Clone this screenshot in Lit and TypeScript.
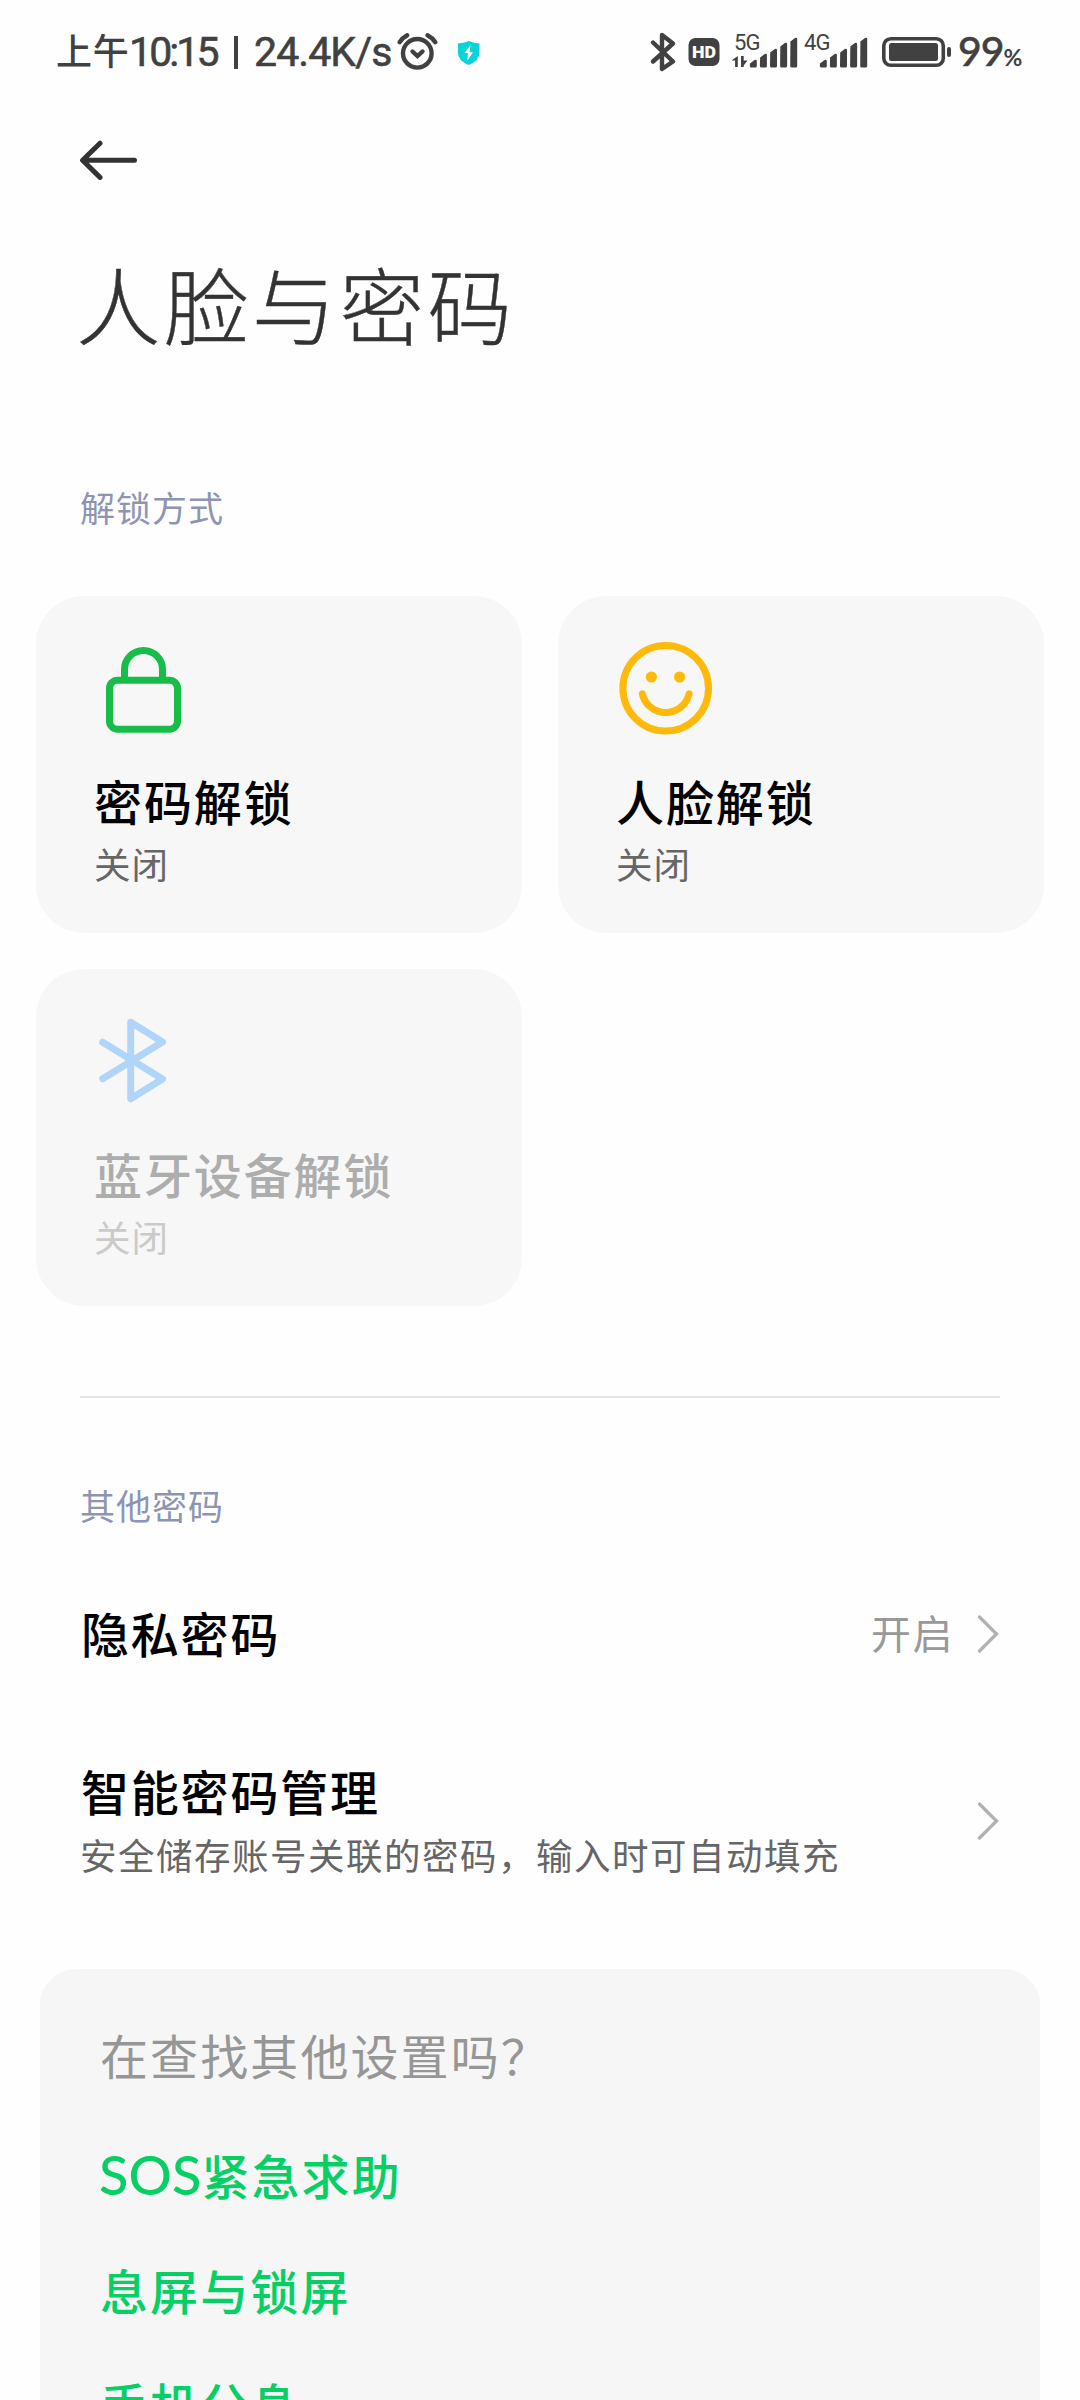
import { LitElement, html, svg, css, type TemplateResult } from "lit";
import { customElement, property } from "lit/decorators.js";

const lockIcon = svg`
  <g fill="none" stroke="#18bd49" stroke-width="7">
    <rect x="13.5" y="40.2" width="68" height="49" rx="8" />
    <path d="M28.5 40V29.5a19 19 0 0 1 38 0V40" />
  </g>`;

const faceIcon = svg`
  <g fill="none" stroke="#ffb90a" stroke-width="7" stroke-linecap="round">
    <circle cx="47.7" cy="48.3" r="42.8" />
    <path d="M24.3 53.9a24 24 0 0 0 46.8 0" />
  </g>
  <circle cx="33.4" cy="37" r="5.6" fill="#ffb90a" />
  <circle cx="61.6" cy="37" r="5.6" fill="#ffb90a" />`;

const bluetoothIcon = svg`
  <path d="M6.7 29.3 66.5 66 34.7 85.7V9.3L66.5 29 6.7 65.7" fill="none"
    stroke="#b1d5f9" stroke-width="7" stroke-linecap="round" stroke-linejoin="round" />`;

@customElement("status-bar")
class StatusBar extends LitElement {
  static styles = css`
    :host {
      display: flex;
      justify-content: space-between;
      height: 104px;
      box-sizing: border-box;
      padding: 0 53px 0 56px;
      color: #414141;
      fill: #414141;
      font-family: Roboto, "Noto Sans CJK SC", sans-serif;
    }
    svg {
      display: block;
      flex: none;
    }
    .group {
      display: flex;
      align-items: center;
      height: 104px;
    }
    .time {
      display: flex;
      align-items: center;
      width: 340px;
      font-size: 41px;
      line-height: 104px;
      font-weight: 400;
      white-space: pre;
      -webkit-text-stroke: 0.6px #414141;
    }
    .han {
      width: 73px;
      padding-top: 2px;
      font-size: 36px;
      letter-spacing: 0.8px;
      font-weight: 500;
      -webkit-text-stroke: 0;
    }
    .clock {
      width: 105px;
      letter-spacing: -2.9px;
    }
    .bar {
      width: 4px;
      height: 33px;
      margin-right: 16px;
      background: #414141;
    }
    .speed {
      letter-spacing: -0.9px;
    }
    .level {
      width: 69px;
      margin-left: -2px;
      padding-top: 3px;
      font-size: 41px;
      line-height: 104px;
      font-weight: 500;
      font-family: Lato, Roboto, sans-serif;
      letter-spacing: -1px;
      white-space: nowrap;
      -webkit-text-stroke: 0.5px #414141;
    }
    .percent {
      font-size: 23px;
      font-weight: 700;
      -webkit-text-stroke: 0;
    }
    .tag {
      font-size: 22px;
      letter-spacing: -0.8px;
    }
    .hd {
      font-size: 16.5px;
      font-weight: 900;
      fill: #fff;
    }
  `;

  private bars(x: number) {
    const tops = [60, 54, 49, 43, 38];
    return tops.map((top, i) => {
      const left = x + i * 10.1;
      return svg`<path d="M${left} ${top + 3.5}l4.6-3.6q2.2-.8 2.2 1.2V66q0 1.6-1.6 1.6h-3.8q-1.6 0-1.6-1.6z" />`;
    });
  }

  render() {
    return html`
      <div class="group">
        <div class="time">
          <span class="han">上午</span><span class="clock">10:15</span><span class="bar"></span><span class="speed">24.4K/s</span>
        </div>
        <svg width="90" height="104" viewBox="396 0 90 104">
          <g fill="none" stroke="#414141" stroke-width="4.4" stroke-linecap="round">
            <circle cx="417.3" cy="53.3" r="14.3" />
            <path d="M399.6 42.2q3-4.6 7.6-7M427.5 35.2q4.8 2.4 7.8 7M412.5 51.5l5 4.6 5-4.6" />
          </g>
          <path d="M468.7 41q5 2.4 10.8 2.6v8.8q0 8-10.8 12.6-10.8-4.6-10.8-12.6V43.6q5.8-.2 10.8-2.6z" fill="#0cd3d8" />
          <path d="M470.5 45l-6 8h3.4l-.4 7.4 5.4-8.2h-3.2z" fill="#fff" />
        </svg>
      </div>
      <div class="group">
        <svg width="312" height="104" viewBox="649 0 312 104">
          <path d="M654 42.5 674 61.5 663 69V35L674 43.5 654 61.5" fill="none" stroke="#414141"
            stroke-width="4.4" stroke-linecap="round" stroke-linejoin="round" />
          <rect x="689.5" y="38" width="31" height="28" rx="7" />
          <text class="hd" x="693" y="58" textLength="24" lengthAdjust="spacingAndGlyphs">HD</text>
          <text class="tag" x="735" y="49.5">5G</text>
          <path d="M732.5 60.5 738.8 56V67h-2.7v-6.5zM742 56h2.7v4.5h3.8l-3.8 5V67H742z" />
          ${this.bars(751)}
          <text class="tag" x="805" y="49.5">4G</text>
          ${this.bars(821)}
          <rect x="884.8" y="38.8" width="59.5" height="26.4" rx="7" fill="none" stroke="#414141" stroke-width="3.6" />
          <rect x="890" y="43" width="49" height="18" rx="2.5" />
          <rect x="948" y="47" width="4" height="10" rx="2" />
        </svg>
        <span class="level">99<span class="percent">%</span></span>
      </div>
    `;
  }
}

@customElement("unlock-card")
class UnlockCard extends LitElement {
  @property() name = "";
  @property() state = "";
  @property({ type: Boolean }) disabled = false;
  @property({ attribute: false }) icon: TemplateResult | unknown;

  static styles = css`
    :host {
      display: flex;
      flex-direction: column;
      box-sizing: border-box;
      height: 337px;
      padding: 44px 58px 0 58px;
      border-radius: 48px;
      background: #f7f7f7;
    }
    svg {
      display: block;
      margin: 0 0 28px 2px;
    }
    .name {
      font-size: 48px;
      line-height: 72px;
      letter-spacing: 1.9px;
      font-weight: 500;
      color: #000;
    }
    .state {
      font-size: 36.5px;
      line-height: 56px;
      letter-spacing: 1px;
      color: #666;
    }
    .off .name {
      color: #adadad;
    }
    .off .state {
      color: #cacaca;
    }
  `;

  render() {
    return html`
      <svg width="96" height="96" viewBox="0 0 96 96">${this.icon}</svg>
      <div class=${this.disabled ? "off" : "on"}>
        <div class="name">${this.name}</div>
        <div class="state">${this.state}</div>
      </div>
    `;
  }
}

@customElement("app-root")
class AppRoot extends LitElement {
  static styles = css`
    :host {
      display: block;
      height: 2400px;
      overflow: hidden;
      background: #fefefe;
      font-family: "Noto Sans CJK SC", sans-serif;
    }
    svg {
      display: block;
      flex: none;
    }
    .back {
      padding: 36px 0 0 78px;
      height: 40px;
    }
    h1 {
      margin: 62px 0 0 76px;
      font-size: 84.5px;
      line-height: 120px;
      letter-spacing: 3.4px;
      font-weight: 300;
      color: #333;
      -webkit-text-stroke: 0.4px #333;
    }
    h2 {
      margin: 0;
      padding-left: 80px;
      font-size: 35px;
      line-height: 60px;
      letter-spacing: 1px;
      font-weight: 400;
      color: #8d95b2;
    }
    .methods {
      margin-top: 115px;
    }
    .cards {
      display: grid;
      grid-template-columns: 486px 486px;
      gap: 36px;
      padding: 59px 36px 0;
    }
    .divider {
      height: 2px;
      margin: 90px 80px 77px;
      background: #e5e5e5;
    }
    .row {
      display: flex;
      align-items: center;
      padding: 0 80px 0 81px;
    }
    .privacy {
      height: 130px;
      margin-top: 34px;
    }
    .manager {
      height: 150px;
      margin-top: 47px;
    }
    .text {
      flex: 1;
      margin-top: -5px;
    }
    .label {
      font-size: 48px;
      line-height: 72px;
      letter-spacing: 1.8px;
      font-weight: 500;
      color: #000;
    }
    .note {
      margin-left: -1px;
      font-size: 36.5px;
      line-height: 58px;
      letter-spacing: 1.5px;
      color: #666;
    }
    .value {
      margin: -5px 22px 0 0;
      font-size: 40px;
      line-height: 60px;
      letter-spacing: 1.5px;
      color: #999;
    }
    .help {
      height: 460px;
      box-sizing: border-box;
      margin: 73px 40px 0;
      padding: 49px 60px 0;
      border-radius: 36px 36px 0 0;
      background: #f6f6f6;
    }
    .question {
      font-size: 48px;
      line-height: 72px;
      letter-spacing: 2.1px;
      color: #969696;
    }
    .links {
      display: flex;
      flex-direction: column;
      gap: 42.5px;
      margin-top: 48px;
    }
    .link {
      font-size: 48px;
      line-height: 72px;
      letter-spacing: 2.1px;
      font-weight: 500;
      color: #05cf65;
      white-space: nowrap;
    }
    .latin {
      margin-left: -1px;
      font-family: Lato, sans-serif;
      font-size: 54px;
      line-height: 1;
      letter-spacing: 0.1px;
    }
  `;

  private chevron() {
    return html`<svg width="24" height="40" viewBox="0 0 24 40">
      <path d="M3.5 3 20.5 20 3.5 37" fill="none" stroke="#b2b2b2" stroke-width="3.3" stroke-linecap="round" />
    </svg>`;
  }

  render() {
    return html`
      <status-bar></status-bar>
      <div class="back">
        <svg width="62" height="40" viewBox="78 140 62 40">
          <path d="M134.5 160.3H83M100 143.2 82.6 160.3 100 177.4" fill="none" stroke="#333"
            stroke-width="5" stroke-linecap="round" stroke-linejoin="round" />
        </svg>
      </div>
      <h1>人脸与密码</h1>
      <h2 class="methods">解锁方式</h2>
      <div class="cards">
        <unlock-card name="密码解锁" state="关闭" .icon=${lockIcon}></unlock-card>
        <unlock-card name="人脸解锁" state="关闭" .icon=${faceIcon}></unlock-card>
        <unlock-card name="蓝牙设备解锁" state="关闭" disabled .icon=${bluetoothIcon}></unlock-card>
      </div>
      <div class="divider"></div>
      <h2>其他密码</h2>
      <div class="row privacy">
        <div class="text label">隐私密码</div>
        <div class="value">开启</div>
        ${this.chevron()}
      </div>
      <div class="row manager">
        <div class="text">
          <div class="label">智能密码管理</div>
          <div class="note">安全储存账号关联的密码，输入时可自动填充</div>
        </div>
        ${this.chevron()}
      </div>
      <div class="help">
        <div class="question">在查找其他设置吗？</div>
        <div class="links">
          <div class="link"><span class="latin">SOS</span>紧急求助</div>
          <div class="link">息屏与锁屏</div>
          <div class="link">手机分身</div>
        </div>
      </div>
    `;
  }
}
